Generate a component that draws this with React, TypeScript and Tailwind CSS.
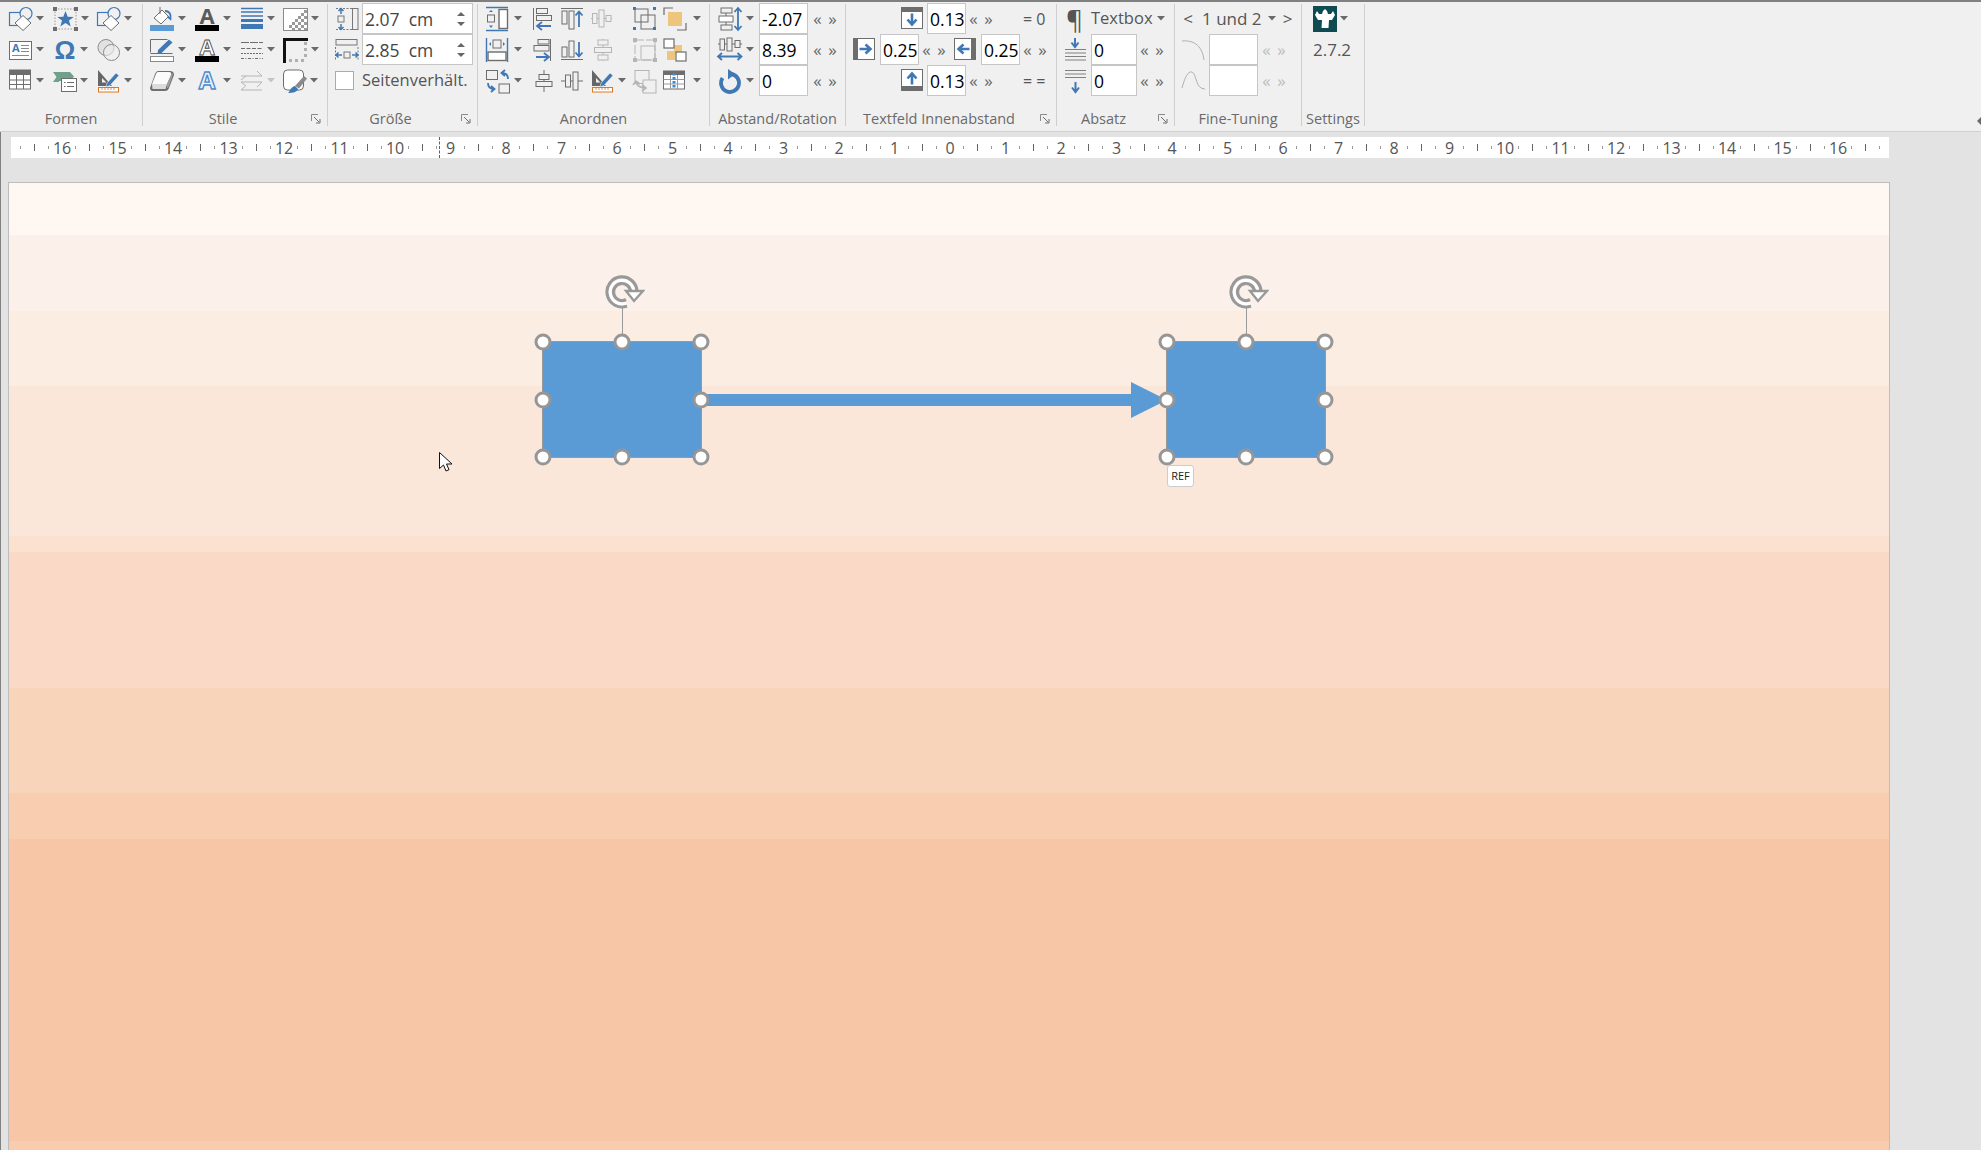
import type { ReactNode } from "react";

const B = "#3f78b5";
const G = "#6d6d6d";
const LG = "#b5b5b5";
const OR = "#e3761c";
const TAN = "#edc57c";

const Ico = ({ children, w = 24, h = 24 }: { children: ReactNode; w?: number; h?: number }) => (
  <svg width={w} height={h} viewBox={`0 0 ${w} ${h}`} fill="none" className="shrink-0 overflow-visible">
    {children}
  </svg>
);

const Caret = ({ light }: { light?: boolean }) => (
  <svg width="8" height="5" viewBox="0 0 8 5" className="shrink-0">
    <path d="M0 0h8L4 4.500z" fill={light ? "#c4c4c4" : "#6a6a6a"} />
  </svg>
);

const Tool = ({ icon, className = "w-[44px] gap-[3px]", caret = true, light }: { icon: ReactNode; className?: string; caret?: boolean; light?: boolean }) => (
  <div className={`flex items-center h-[31px] shrink-0 ${className}`}>
    {icon}
    {caret && <Caret light={light} />}
  </div>
);

const Launcher = () => (
  <div className="w-[24px] flex items-center justify-center pl-[2px]">
    <svg width="10" height="10" viewBox="0 0 10 10" fill="none">
      <path d="M.5 7V.5H7" stroke="#8a8a8a" />
      <path d="M3 3l5 5M9 5v4H5" stroke="#6d6d6d" />
    </svg>
  </div>
);

const Group = ({ title, width, launcher, children }: { title: string; width: string; launcher?: boolean; children: ReactNode }) => (
  <section className={`${width} shrink-0 pt-[1px]`}>
    <div className="h-[93px]">{children}</div>
    <div className="mt-[12px] h-[22px] flex items-center text-[14.500px] text-[#6a6a6a]">
      <span className="flex-1 text-center whitespace-nowrap">{title}</span>
      {launcher && <Launcher />}
    </div>
  </section>
);

const Divider = () => <div className="w-px h-[122px] mt-[2px] bg-[#cfcfcf] shrink-0" />;

const Row = ({ className = "", children }: { className?: string; children: ReactNode }) => (
  <div className={`flex items-center h-[31px] ${className}`}>{children}</div>
);

const Field = ({ value, className = "" }: { value?: string; className?: string }) => (
  <div className={`h-[31px] shrink-0 bg-white border border-[#c6c6c6] flex items-center pl-[2px] pt-[1px] text-[17.5px] text-black ${className}`}>
    {value}
  </div>
);

const Steppers = ({ dim, className = "" }: { dim?: boolean; className?: string }) => (
  <div className={`flex shrink-0 text-[17px] ${dim ? "text-[#bdbdbd]" : "text-[#666]"} ${className}`}>
    <span className="w-[15px] text-center">«</span>
    <span className="w-[15px] text-center">»</span>
  </div>
);

const SizeField = ({ value }: { value: string }) => (
  <div className="ml-[3px] w-[111px] h-[31px] bg-white border border-[#c6c6c6] flex items-center justify-between pl-[2px] pr-[7px] text-[17.5px] text-[#444]">
    <span className="whitespace-pre pt-[1px]">{value}</span>
    <div className="flex flex-col gap-[6px]">
      <svg width="8" height="4" viewBox="0 0 8 4"><path d="M0 4h8L4 0z" fill="#666" /></svg>
      <svg width="8" height="4" viewBox="0 0 8 4"><path d="M0 0h8L4 4z" fill="#666" /></svg>
    </div>
  </div>
);

/* ---------- Formen ---------- */
const ShapesIcon = () => (
  <Ico>
    <rect x=".5" y="5.500" width="14" height="13" stroke={B} strokeWidth="1.200" />
    <circle cx="17" cy="6.500" r="6" stroke={B} strokeWidth="1.200" fill="#f0f0f0" />
    <path d="M14 8.500l8 7.500-8 7.500-8-7.500z" fill="#fff" stroke={G} />
  </Ico>
);
const StarIcon = () => (
  <Ico w={25}>
    <rect x="2" y="2" width="21" height="20" stroke="#999" strokeDasharray="1.500 1.500" />
    <path d="M0 0h4v4H0zM21 0h4v4h-4zM0 20h4v4H0zM21 20h4v4h-4z" fill="#6d6d6d" />
    <path d="M12.500 4l2.200 5.700 6 .2-4.700 3.700 1.700 5.800-5.200-3.400-5.200 3.400 1.700-5.800-4.700-3.700 6-.2z" fill={B} />
  </Ico>
);
const TextBoxIcon = () => (
  <Ico>
    <rect x=".5" y="3.500" width="22" height="18" fill="#fff" stroke={G} />
    <text x="3" y="14" fontSize="11" fontWeight="700" fill={B} fontFamily="Open Sans">A</text>
    <path d="M12 7.500h8M12 10.500h8M12 13.500h8M3 17.500h17" stroke="#8a8a8a" />
  </Ico>
);
const OmegaIcon = () => (
  <Ico>
    <text x="12" y="21" textAnchor="middle" fontSize="26" fontWeight="700" fill={B} fontFamily="Liberation Sans">Ω</text>
  </Ico>
);
const VennIcon = () => (
  <Ico>
    <circle cx="9" cy="9.500" r="8" fill="#e2e2e2" stroke="#8a8a8a" />
    <circle cx="14.500" cy="14.500" r="8" fill="#f0f0f0" fillOpacity=".6" stroke="#8a8a8a" />
  </Ico>
);
const TableIcon = () => (
  <Ico>
    <rect x=".5" y="1" width="21" height="19" fill="#fff" stroke={G} />
    <rect x="0" y="1" width="22" height="5" fill={G} />
    <path d="M.5 11h21M.5 15.500h21M7.500 6v14M14.500 6v14" stroke={G} />
  </Ico>
);
const FlowIcon = () => (
  <Ico>
    <path d="M0 3h17l4 4.500L18 11v1H6v1H0l3.500-5z" fill="#6fa08c" />
    <rect x="8.500" y="9.500" width="15" height="13" fill="#fff" stroke={G} />
    <path d="M11 13.500h1.500M14 13.500h7M11 17.500h1.500M14 17.500h7" stroke={G} />
  </Ico>
);
const RulerPenIcon = () => (
  <Ico>
    <path d="M1 1v16h14z" fill="#666" />
    <path d="M5 9v4.500h4.500z" fill="#f0f0f0" />
    <path d="M10 14l9-10 3 2.500-9 10-4 1.500z" fill={B} stroke="#f0f0f0" strokeWidth=".6" />
    <rect x="1.500" y="18.500" width="20" height="4.500" fill="#fff" stroke={OR} />
    <path d="M5 19v2M8 19v2M11 19v2M14 19v2M17 19v2" stroke={OR} strokeWidth=".8" />
  </Ico>
);

/* ---------- Stile ---------- */
const BucketIcon = () => (
  <Ico>
    <path d="M12 3L4 11l7 6 7.500-7.500z" fill="#fff" stroke={G} />
    <path d="M10 0v7" stroke={G} />
    <path d="M15 4c4 0 6.500 3 5.500 8l-3-2.500" stroke={B} strokeWidth="1.800" />
    <rect x="0" y="18" width="24" height="6" fill="#5b9bd5" />
  </Ico>
);
const LetterA = ({ stroke, barColor = "#000" }: { stroke?: boolean; barColor?: string }) => (
  <Ico>
    <text
      x="12"
      y="17"
      textAnchor="middle"
      fontSize="22"
      fontWeight="700"
      fontFamily="Open Sans"
      fill={stroke ? "#fff" : "#5a5a5a"}
      stroke={stroke ? "#444" : "none"}
      strokeWidth=".8"
    >
      A
    </text>
    <rect x="0" y="18" width="24" height="6" fill={barColor} />
  </Ico>
);
const WeightIcon = () => (
  <Ico>
    <path d="M1 1.500h22M1 5h22M1 9h22" stroke={B} strokeWidth="1.300" />
    <rect x="1" y="12" width="22" height="3" fill={B} />
    <rect x="1" y="17" width="22" height="5" fill={B} />
  </Ico>
);
const CheckerFade = () => (
  <Ico w={25}>
    <rect x=".5" y="1.500" width="24" height="22" fill="#fff" stroke="#8a8a8a" />
    <path d="M21 3h3v3h-3zM18 6h3v3h-3zM21 9h3v3h-3zM15 9h3v3h-3zM18 12h3v3h-3zM12 12h3v3h-3zM21 15h3v3h-3zM15 15h3v3h-3zM9 15h3v3H9zM18 18h3v3h-3zM12 18h3v3h-3zM6 18h3v3H6zM21 21h3v2h-3zM15 21h3v2h-3zM9 21h3v2H9z" fill="#9a9a9a" />
  </Ico>
);
const PenBoxIcon = () => (
  <Ico>
    <path d="M.5 14.500v-13h17M.5 15.500h22" stroke={G} />
    <path d="M8 12L19 1.500l3.500 3-11 10.500-4 1z" fill={B} />
    <rect x=".5" y="18.500" width="23" height="5" fill="#fff" stroke="#8a8a8a" />
  </Ico>
);
const DashIcon = () => (
  <Ico>
    <path d="M1 4.500h22" stroke={G} strokeDasharray="8 1" />
    <path d="M1 10.500h22" stroke={G} strokeDasharray="4 1.500" />
    <path d="M1 15.500h22" stroke={G} strokeDasharray="2 1" />
    <path d="M1 20.500h22" stroke={G} strokeDasharray="3 1.500 1 1.500" />
  </Ico>
);
const ShadowCorner = () => (
  <Ico w={25}>
    <path d="M0 0h25v3H3v22H0z" fill="#111" />
    <path d="M21 4h3v3h-3zM21 10h3v3h-3zM21 16h3v3h-3zM18 21h3v3h-3zM12 21h3v3h-3zM6 21h3v3H6z" fill="#b0b0b0" />
  </Ico>
);
const EraserIcon = () => (
  <Ico>
    <path d="M8 2h12q4 0 4 4l-5 13q-1 3-4 3H3q-3 0-3-3l5-14q1-3 3-3z" fill="#6f6f6f" />
    <path d="M8 3h11q3 0 2 3l-4 9H2l4-10q.5-2 2-2z" fill="#fbfbfb" />
    <path d="M17 15l4-9q1-2 2-1l-4 12q-.5 2-2 2z" fill="#a0a0a0" />
    <path d="M2 15h15l-1.500 5H2.500z" fill="#dcdcdc" />
  </Ico>
);
const GlowA = () => (
  <Ico>
    <text x="12" y="20" textAnchor="middle" fontSize="24" fontWeight="700" fontFamily="Open Sans" fill="#eaf2fb" stroke="#4a89c8" strokeWidth="1.300">A</text>
  </Ico>
);
const SwapLines = () => (
  <Ico>
    <path d="M1 7h21M17 2l5 5M1 11l5-4M1 13h21M1 13l5 4M17 18l5-5M1 21h21M1 21l4-3.500" stroke={LG} fill="none" />
  </Ico>
);
const BrushBox = () => (
  <Ico>
    <rect x=".5" y="1" width="20" height="20" rx="4" fill="#fff" stroke={G} />
    <path d="M12 17l9-10 3 2.500-8 10z" fill="#8a8a8a" />
    <path d="M5 24c2-1 2-6 7-7l3 3c-1 3-5 4-10 4z" fill={B} />
  </Ico>
);

/* ---------- Groesse ---------- */
const HeightIcon = () => (
  <Ico>
    <path d="M1 1.500h16M1 22.500h16" stroke="#777" strokeDasharray="2 1.500" />
    <rect x="17.500" y="1.500" width="5.500" height="21" stroke="#777" />
    <rect x="3" y="9" width="6" height="6" stroke="#777" />
    <path d="M6 1v6M3.500 4L6 1.500 8.500 4M6 17v6M3.500 20L6 22.500 8.500 20" stroke={B} strokeWidth="1.500" />
  </Ico>
);
const WidthIcon = () => (
  <Ico>
    <rect x="1" y="1.500" width="21" height="5.500" stroke="#777" />
    <path d="M.5 9v13M23 9v13" stroke="#777" strokeDasharray="2 1.500" />
    <rect x="9" y="14" width="6" height="6" stroke="#777" />
    <path d="M1 17h6M3.500 14.500L1 17l2.500 2.500M17 17h6M20.500 14.500L23 17l-2.500 2.500" stroke={B} strokeWidth="1.500" />
  </Ico>
);

/* ---------- Anordnen ---------- */
const DistTop = () => (
  <Ico>
    <path d="M0 .5h22M0 23.500h22" stroke={B} strokeWidth="1.400" />
    <rect x="1.500" y="8" width="7" height="7" stroke={G} />
    <rect x="13" y="2.500" width="8.500" height="19" stroke={G} strokeWidth="1.400" fill="#fff" />
    <path d="M3 5h4L5 3zM3 18.500h4L5 21z" fill={B} />
  </Ico>
);
const AlignLeft = () => (
  <Ico>
    <path d="M.5 1v22" stroke={G} />
    <rect x="3.500" y="1.500" width="11" height="5" stroke={G} />
    <rect x="3.500" y="8.500" width="15" height="5" stroke={G} />
    <path d="M4 19h14M9 15l-5 4 5 4" stroke={B} strokeWidth="1.800" />
  </Ico>
);
const AlignTop = () => (
  <Ico>
    <path d="M0 1.500h22" stroke={G} />
    <rect x="1" y="4" width="5" height="13" stroke={G} />
    <rect x="8" y="4" width="5" height="18" stroke={G} />
    <path d="M18 20V5M14.500 8.500L18 4.500l3.500 4" stroke={B} strokeWidth="1.800" />
  </Ico>
);
const DisabledH = () => (
  <Ico>
    <path d="M0 11.500h21" stroke={LG} />
    <rect x="1.500" y="6.500" width="4.500" height="10" fill="#f0f0f0" stroke={LG} />
    <rect x="8" y="3" width="5" height="17" fill="#f0f0f0" stroke={LG} />
    <rect x="15" y="8.500" width="5" height="6" fill="#f0f0f0" stroke={LG} />
  </Ico>
);
const GroupOn = () => (
  <Ico>
    <rect x="2" y="2" width="13" height="13" stroke={G} />
    <rect x="8" y="8" width="14" height="14" stroke={G} />
    <path d="M0 0h3v3H0zM20 0h3v3h-3zM0 20h3v3H0zM20 20h3v3h-3z" fill={B} />
  </Ico>
);
const FrontIcon = () => (
  <Ico>
    <path d="M1 8V1h9M23 16v7h-9" stroke={G} strokeWidth="1.200" />
    <rect x="5" y="5" width="14" height="14" fill={TAN} />
  </Ico>
);
const DistLeft = () => (
  <Ico w={22}>
    <path d="M.5 0v24M21.500 0v24" stroke={B} strokeWidth="1.400" />
    <rect x="7" y="2" width="8" height="8" stroke={G} />
    <rect x="2" y="14" width="18" height="8.500" fill="#fff" stroke={G} strokeWidth="1.400" />
    <path d="M5 4v4L3 6zM17 4v4l2-2z" fill={B} />
  </Ico>
);
const AlignRight = () => (
  <Ico>
    <path d="M17.500 1v22" stroke={G} />
    <rect x="5" y="1.500" width="11" height="4.500" stroke={G} />
    <rect x="1" y="7.500" width="15" height="5.500" stroke={G} />
    <path d="M3 19h13M11 15l5 4-5 4" stroke={B} strokeWidth="1.800" />
  </Ico>
);
const AlignBottom = () => (
  <Ico>
    <path d="M0 21.500h22" stroke={G} />
    <rect x="1" y="9" width="5" height="10" stroke={G} />
    <rect x="8" y="3" width="5" height="16" stroke={G} />
    <path d="M18 4v14M14.500 14.500l3.500 4 3.500-4" stroke={B} strokeWidth="1.800" />
  </Ico>
);
const DisabledV = () => (
  <Ico>
    <path d="M12 1v22" stroke={LG} />
    <rect x="7" y="2" width="10" height="5" fill="#f0f0f0" stroke={LG} />
    <rect x="3.500" y="9.500" width="17" height="5" fill="#f0f0f0" stroke={LG} />
    <rect x="7" y="17" width="10" height="5" fill="#f0f0f0" stroke={LG} />
  </Ico>
);
const GroupOff = () => (
  <Ico>
    <rect x="2" y="2" width="20" height="20" stroke={LG} strokeDasharray="9 2" />
    <rect x="8" y="8" width="14" height="14" stroke={LG} />
    <path d="M0 0h4v4H0zM20 0h4v4h-4zM0 20h4v4H0zM20 20h4v4h-4z" fill={LG} />
  </Ico>
);
const BackIcon = () => (
  <Ico>
    <rect x="11" y="7" width="8" height="9" fill={TAN} />
    <rect x="4" y="13" width="8" height="9" fill={TAN} />
    <rect x="1" y="1" width="10" height="9" fill="#fff" stroke={G} strokeWidth="1.200" />
    <rect x="13" y="14" width="10" height="9" fill="#fff" stroke={G} strokeWidth="1.200" />
  </Ico>
);
const SwapBoxes = () => (
  <Ico>
    <rect x=".5" y="1.500" width="11" height="9" stroke={G} />
    <rect x="13" y="15" width="10.500" height="9" stroke={G} />
    <path d="M22 10c0-4-2-6-6-6M19 1l-3.500 3L19 7M2 14c0 4 2 6 6 6M5 23l3.500-3L5 17" stroke={B} strokeWidth="1.800" />
  </Ico>
);
const CenterV = () => (
  <Ico>
    <path d="M11 1v22" stroke={G} />
    <rect x="6" y="5.500" width="10" height="5" fill="#f0f0f0" stroke={G} />
    <rect x="3" y="12.500" width="16" height="5" fill="#f0f0f0" stroke={G} />
  </Ico>
);
const CenterH = () => (
  <Ico>
    <path d="M0 12h22" stroke={G} />
    <rect x="4.500" y="6" width="5" height="12" fill="#f0f0f0" stroke={G} />
    <rect x="12" y="3" width="5" height="18" fill="#f0f0f0" stroke={G} />
  </Ico>
);
const UngroupOff = () => (
  <Ico>
    <rect x="2" y="1.500" width="14" height="13" stroke={LG} />
    <rect x="10" y="11" width="13" height="13" stroke={LG} fill="#f0f0f0" />
    <path d="M13 19c-6 0-9-2-10-6M0 16l3-4 4 3M9 16l4 3-4 3" stroke={LG} strokeWidth="1.600" />
  </Ico>
);
const ColTable = () => (
  <Ico>
    <rect x=".5" y="2" width="21" height="18" fill="#fff" stroke={G} />
    <rect x="0" y="2" width="22" height="4" fill={G} />
    <path d="M.5 10.500h21M.5 15h21M7.500 6v14M14.500 6v14" stroke="#999" />
    <path d="M11 4v16" stroke="#2f8ee0" strokeWidth="3" strokeDasharray="2.500 1.500" />
  </Ico>
);

/* ---------- Abstand / Textfeld / Absatz ---------- */
const SpaceV = () => (
  <Ico>
    <rect x="3" y="1" width="11" height="5" stroke={G} />
    <rect x="1" y="9" width="14" height="6" stroke={G} fill="#fff" />
    <rect x="3" y="18" width="11" height="5" stroke={G} />
    <path d="M8 6v3M8 15v3" stroke={G} />
    <path d="M20 1v22M16.500 5L20 1l3.500 4M16.500 19l3.500 4 3.500-4" stroke={B} strokeWidth="1.800" />
  </Ico>
);
const SpaceH = () => (
  <Ico>
    <path d="M0 6h24" stroke={G} />
    <rect x="2" y="1" width="4.500" height="11" fill="#f0f0f0" stroke={G} />
    <rect x="9" y="0" width="5" height="13" fill="#f0f0f0" stroke={G} />
    <rect x="17" y="2.500" width="5" height="7" fill="#f0f0f0" stroke={G} />
    <path d="M0 18.500h23M4 15l-4 3.500L4 22M19.500 15l4 3.500-4 3.500" stroke={B} strokeWidth="1.800" />
  </Ico>
);
const RotateIcon = () => (
  <Ico>
    <path d="M13 3.500A9 9 0 1 1 4.500 7.500" stroke={B} strokeWidth="3.800" transform="translate(0 1.500)" />
    <path d="M10 0l7 5-7 5.500z" fill={B} />
  </Ico>
);
const InsetIcon = ({ deg }: { deg: number }) => (
  <Ico>
    <g transform={`rotate(${deg} 11 11)`}>
      <rect x=".5" y=".5" width="21" height="21" fill="#fff" stroke={G} />
      <rect x="0" y="0" width="22" height="5" fill={G} />
      <path d="M11 6.500v11M6.500 12.500l4.500 5 4.500-5" stroke={B} strokeWidth="2.600" />
    </g>
  </Ico>
);
const SpaceBefore = () => (
  <Ico>
    <path d="M11 0v8M7.500 4.500L11 9l3.500-4.500" stroke={B} strokeWidth="2" />
    <path d="M1 11.500h21M1 15h21M1 18.500h21M1 22h21" stroke="#808080" />
  </Ico>
);
const SpaceAfter = () => (
  <Ico>
    <path d="M1 1.500h21M1 5h21M1 8.500h21" stroke="#808080" />
    <path d="M11.500 13v9M8 18.500l3.500 4.500 3.500-4.500" stroke={B} strokeWidth="2" />
  </Ico>
);
const CurveA = () => (
  <Ico>
    <path d="M0 3c10-1 20 3 22 19" stroke="#b0b0b0" />
  </Ico>
);
const CurveB = () => (
  <Ico>
    <path d="M0 19C3 8 6 2 10 3c5 2 3 17 13 17" stroke="#b0b0b0" />
  </Ico>
);
const Logo = () => (
  <Ico w={24} h={26}>
    <rect width="24" height="26" fill="#0f4c52" />
    <path d="M2 9l2-4 2 3 3 0 1-3 2-2 2 2 1 3 3 0 2-3 2 4-3 5-3 0-.5 8h-7L9 14H5z" fill="#fff" />
  </Ico>
);

/* ---------- Ruler ---------- */
const ticks = Array.from({ length: 135 }, (_, i) => i - 67);

const Ruler = () => (
  <div className="relative ml-[3px] mt-[5px] w-[1878px] h-[21px] bg-white flex items-center pl-[2.500px] overflow-hidden">
    {ticks.map((t) => (
      <div key={t} className="w-[13.875px] shrink-0 flex items-center justify-center">
        {t % 4 === 0 ? (
          <span className="text-[16px] leading-none text-[#555]">{Math.abs(t) / 4}</span>
        ) : t % 2 === 0 ? (
          <span className="w-px h-[7px] bg-[#666]" />
        ) : (
          <span className="w-px h-[3px] bg-[#999]" />
        )}
      </div>
    ))}
    <div className="absolute left-[428px] top-0 h-full border-l border-dashed border-[#c0392b]" />
  </div>
);

/* ---------- Slide ---------- */
const bands = [
  { h: "h-[52px]", c: "bg-[#fff7f1]" },
  { h: "h-[76px]", c: "bg-[#fcf1ea]" },
  { h: "h-[75px]", c: "bg-[#fbede2]" },
  { h: "h-[150px]", c: "bg-[#fbe6da]" },
  { h: "h-[16px]", c: "bg-[#fbe1d0]" },
  { h: "h-[136px]", c: "bg-[#fadac6]" },
  { h: "h-[105px]", c: "bg-[#f8d4bb]" },
  { h: "h-[46px]", c: "bg-[#f8cdb0]" },
  { h: "h-[302px]", c: "bg-[#f7c6a6]" },
  { h: "h-[10px]", c: "bg-[#f9ccae]" },
];

const handleSpots = [
  "left-0 top-0",
  "left-1/2 top-0",
  "left-full top-0",
  "left-0 top-1/2",
  "left-full top-1/2",
  "left-0 top-full",
  "left-1/2 top-full",
  "left-full top-full",
];

const Shape = ({ className, children }: { className: string; children?: ReactNode }) => (
  <div className={`absolute top-[158px] h-[117px] w-[160px] bg-[#5b9bd5] border border-[#999] ${className}`}>
    <div className="absolute left-1/2 bottom-full w-px h-[34px] bg-[#999]" />
    <svg width="40" height="36" viewBox="0 0 40 36" fill="none" className="absolute left-1/2 -ml-[17px] -top-[67px]">
      <path d="M32 17A15 15 0 1 0 22 31" stroke="#999" strokeWidth="3.200" />
      <path d="M28.500 17A11.500 11.500 0 1 0 21 28" stroke="#fff" strokeWidth="3.400" />
      <path d="M25.500 17A8.500 8.500 0 1 0 21 24.500" stroke="#999" strokeWidth="3.200" />
      <path d="M21 16h17l-9 10z" fill="#fff" stroke="#999" strokeWidth="2.400" />
    </svg>
    {handleSpots.map((s) => (
      <span key={s} className={`absolute ${s} -translate-x-1/2 -translate-y-1/2 w-[17px] h-[17px] rounded-full bg-white border-[3.500px] border-[#969696]`} />
    ))}
    {children}
  </div>
);

const Slide = () => (
  <div className="relative mt-[24px] w-[1882px] border-l border-r border-t border-[#bdbdbd] flex flex-col">
    {bands.map((b) => (
      <div key={b.c} className={`${b.h} ${b.c}`} />
    ))}
    <svg width="476" height="36" viewBox="0 0 476 36" className="absolute left-[692px] top-[199px]">
      <rect x="0" y="12" width="432" height="12" fill="#5b9bd5" />
      <path d="M430 0l36 18-36 18z" fill="#5b9bd5" />
    </svg>
    <Shape className="left-[533px]" />
    <Shape className="left-[1157px]">
      <div className="absolute left-0 top-[calc(100%+8px)] w-[27px] h-[22px] bg-white border border-[#ccc] rounded-[3px] flex items-center justify-center text-[11px] text-[#222]">
        REF
      </div>
    </Shape>
    <svg width="14" height="21" viewBox="0 0 14 21" className="absolute left-[430px] top-[269px]">
      <path d="M.5.500v16l4-3.500 2.500 6 3-1.300-2.500-5.700h5.500z" fill="#fff" stroke="#111" />
    </svg>
  </div>
);

export default function App() {
  return (
    <div className="w-[1981px] h-[1150px] overflow-hidden flex flex-col bg-[#e3e3e3] font-['Open_Sans',sans-serif]">
      <header className="h-[132px] shrink-0 flex bg-[#f0f0f0] border-t-2 border-t-[#808080] border-b border-b-[#d0d0d0]">
        <Group title="Formen" width="w-[142px]">
          <Row className="pl-[9px]">
            <Tool icon={<ShapesIcon />} />
            <Tool icon={<StarIcon />} />
            <Tool icon={<ShapesIcon />} />
          </Row>
          <Row className="pl-[9px]">
            <Tool icon={<TextBoxIcon />} />
            <Tool icon={<OmegaIcon />} />
            <Tool icon={<VennIcon />} />
          </Row>
          <Row className="pl-[9px]">
            <Tool icon={<TableIcon />} />
            <Tool icon={<FlowIcon />} />
            <Tool icon={<RulerPenIcon />} />
          </Row>
        </Group>
        <Divider />
        <Group title="Stile" width="w-[184px]" launcher>
          <Row className="pl-[7px]">
            <Tool icon={<BucketIcon />} className="w-[45px] gap-[4px]" />
            <Tool icon={<LetterA />} className="w-[45px] gap-[4px]" />
            <Tool icon={<WeightIcon />} className="w-[43px] gap-[3px]" />
            <Tool icon={<CheckerFade />} />
          </Row>
          <Row className="pl-[7px]">
            <Tool icon={<PenBoxIcon />} className="w-[45px] gap-[4px]" />
            <Tool icon={<LetterA stroke />} className="w-[45px] gap-[4px]" />
            <Tool icon={<DashIcon />} className="w-[43px] gap-[3px]" />
            <Tool icon={<ShadowCorner />} />
          </Row>
          <Row className="pl-[7px]">
            <Tool icon={<EraserIcon />} className="w-[45px] gap-[4px]" />
            <Tool icon={<GlowA />} className="w-[45px] gap-[4px]" />
            <Tool icon={<SwapLines />} className="w-[43px] gap-[3px]" light />
            <Tool icon={<BrushBox />} />
          </Row>
        </Group>
        <Divider />
        <Group title="Größe" width="w-[149px]" launcher>
          <Row className="pl-[7px]">
            <HeightIcon />
            <SizeField value="2.07  cm" />
          </Row>
          <Row className="pl-[7px]">
            <WidthIcon />
            <SizeField value="2.85  cm" />
          </Row>
          <Row className="pl-[7px]">
            <div className="w-[19px] h-[19px] bg-white border border-[#aaa]" />
            <span className="ml-[8px] text-[16.500px] text-[#555] whitespace-nowrap">Seitenverhält.</span>
          </Row>
        </Group>
        <Divider />
        <Group title="Anordnen" width="w-[231px]">
          <Row className="pl-[8px]">
            <Tool icon={<DistTop />} className="w-[47px] gap-[4px]" />
            <Tool icon={<AlignLeft />} caret={false} className="w-[28px]" />
            <Tool icon={<AlignTop />} caret={false} className="w-[30px]" />
            <Tool icon={<DisabledH />} caret={false} className="w-[42px]" />
            <Tool icon={<GroupOn />} caret={false} className="w-[30px]" />
            <Tool icon={<FrontIcon />} className="w-[42px] gap-[6px]" />
          </Row>
          <Row className="pl-[8px]">
            <Tool icon={<DistLeft />} className="w-[47px] gap-[6px]" />
            <Tool icon={<AlignRight />} caret={false} className="w-[28px]" />
            <Tool icon={<AlignBottom />} caret={false} className="w-[30px]" />
            <Tool icon={<DisabledV />} caret={false} className="w-[42px]" />
            <Tool icon={<GroupOff />} caret={false} className="w-[30px]" />
            <Tool icon={<BackIcon />} className="w-[42px] gap-[6px]" />
          </Row>
          <Row className="pl-[8px]">
            <Tool icon={<SwapBoxes />} className="w-[47px] gap-[4px]" />
            <Tool icon={<CenterV />} caret={false} className="w-[28px]" />
            <Tool icon={<CenterH />} caret={false} className="w-[30px]" />
            <Tool icon={<RulerPenIcon />} className="w-[42px] gap-[3px]" />
            <Tool icon={<UngroupOff />} caret={false} className="w-[30px]" />
            <Tool icon={<ColTable />} className="w-[42px] gap-[6px]" />
          </Row>
        </Group>
        <Divider />
        <Group title="Abstand/Rotation" width="w-[135px]">
          <Row className="pl-[8px]">
            <Tool icon={<SpaceV />} className="w-[41px] gap-[4px]" />
            <Field value="-2.07" className="w-[49px]" />
            <Steppers className="ml-[2px]" />
          </Row>
          <Row className="pl-[8px]">
            <Tool icon={<SpaceH />} className="w-[41px] gap-[4px]" />
            <Field value="8.39" className="w-[49px]" />
            <Steppers className="ml-[2px]" />
          </Row>
          <Row className="pl-[8px]">
            <Tool icon={<RotateIcon />} className="w-[41px] gap-[4px]" />
            <Field value="0" className="w-[49px]" />
            <Steppers className="ml-[2px]" />
          </Row>
        </Group>
        <Divider />
        <Group title="Textfeld Innenabstand" width="w-[210px]" launcher>
          <Row className="pl-[55px]">
            <InsetIcon deg={0} />
            <Field value="0.13" className="ml-[2px] w-[39px]" />
            <Steppers />
            <span className="ml-[27px] text-[16px] text-[#555] whitespace-pre">= 0</span>
          </Row>
          <Row className="pl-[7px]">
            <InsetIcon deg={-90} />
            <Field value="0.25" className="ml-[3px] w-[39px]" />
            <Steppers />
            <div className="ml-[5px]">
              <InsetIcon deg={90} />
            </div>
            <Field value="0.25" className="ml-[3px] w-[39px]" />
            <Steppers />
          </Row>
          <Row className="pl-[55px]">
            <InsetIcon deg={180} />
            <Field value="0.13" className="ml-[2px] w-[39px]" />
            <Steppers />
            <span className="ml-[27px] text-[16px] text-[#555] whitespace-pre">= =</span>
          </Row>
        </Group>
        <Divider />
        <Group title="Absatz" width="w-[117px]" launcher>
          <Row className="pl-[9px]">
            <span className="w-[25px] text-[26px] leading-none text-[#555]">¶</span>
            <span className="text-[16.500px] text-[#555]">Textbox</span>
            <span className="ml-[4px]"><Caret /></span>
          </Row>
          <Row className="pl-[7px]">
            <SpaceBefore />
            <Field value="0" className="ml-[3px] w-[46px]" />
            <Steppers />
          </Row>
          <Row className="pl-[7px]">
            <SpaceAfter />
            <Field value="0" className="ml-[3px] w-[46px]" />
            <Steppers />
          </Row>
        </Group>
        <Divider />
        <Group title="Fine-Tuning" width="w-[126px]">
          <Row className="pl-[4px] text-[17px] text-[#555]">
            <span className="w-[18px] text-center">&lt;</span>
            <span className="ml-[5px] whitespace-nowrap">1 und 2</span>
            <span className="ml-[6px]"><Caret /></span>
            <span className="ml-[3px] w-[18px] text-center">&gt;</span>
          </Row>
          <Row className="pl-[7px]">
            <CurveA />
            <Field className="ml-[3px] w-[49px]" />
            <Steppers dim className="ml-[1px]" />
          </Row>
          <Row className="pl-[7px]">
            <CurveB />
            <Field className="ml-[3px] w-[49px]" />
            <Steppers dim className="ml-[1px]" />
          </Row>
        </Group>
        <Divider />
        <Group title="Settings" width="w-[62px]">
          <Row className="pl-[11px] gap-[3px]">
            <Logo />
            <Caret />
          </Row>
          <Row className="pl-[11px] text-[17px] text-[#555]">2.7.2</Row>
        </Group>
        <Divider />
        <div className="ml-auto mt-[115px]">
          <svg width="4" height="8" viewBox="0 0 4 8">
            <path d="M4 0L0 4l4 4z" fill="#6a6a6a" />
          </svg>
        </div>
      </header>
      <main className="flex-1 border-l border-l-[#808080] pl-[7px] overflow-hidden">
        <Ruler />
        <Slide />
      </main>
    </div>
  );
}
